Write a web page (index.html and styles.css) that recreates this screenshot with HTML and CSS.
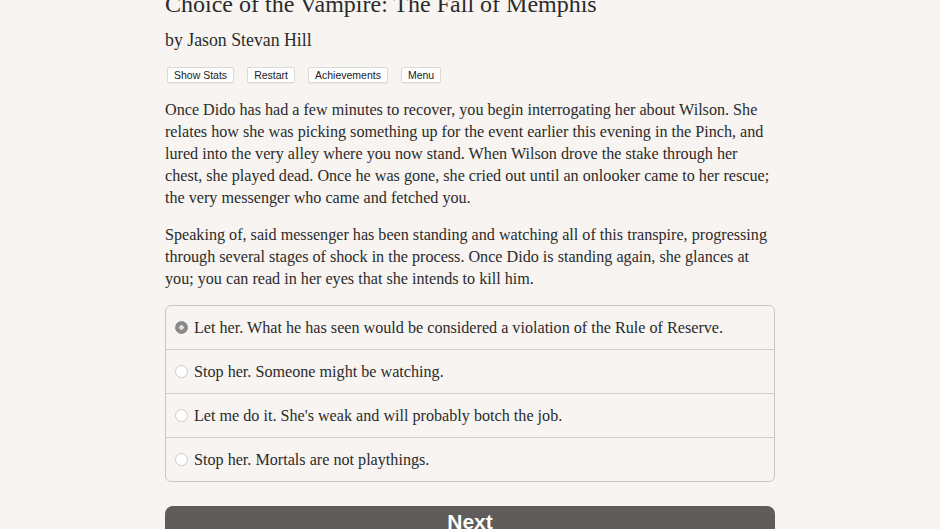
FILE: index.html
```html
<!DOCTYPE html>
<html>
<head>
<meta charset="utf-8">
<link rel="stylesheet" href="styles.css">
</head>
<body>
<div class="page">
  <h1 class="title">Choice of the Vampire: The Fall of Memphis</h1>
  <h2 class="author">by Jason Stevan Hill</h2>
  <div class="toolbar">
    <button class="tool">Show Stats</button>
    <button class="tool">Restart</button>
    <button class="tool">Achievements</button>
    <button class="tool">Menu</button>
  </div>
  <p class="para">Once Dido has had a few minutes to recover, you begin interrogating her about Wilson. She relates how she was picking something up for the event earlier this evening in the Pinch, and lured into the very alley where you now stand. When Wilson drove the stake through her chest, she played dead. Once he was gone, she cried out until an onlooker came to her rescue; the very messenger who came and fetched you.</p>
  <p class="para">Speaking of, said messenger has been standing and watching all of this transpire, progressing through several stages of shock in the process. Once Dido is standing again, she glances at you; you can read in her eyes that she intends to kill him.</p>
  <div class="choices">
    <label class="choice"><span class="radio checked"></span>Let her. What he has seen would be considered a violation of the Rule of Reserve.</label>
    <label class="choice"><span class="radio"></span>Stop her. Someone might be watching.</label>
    <label class="choice"><span class="radio"></span>Let me do it. She's weak and will probably botch the job.</label>
    <label class="choice"><span class="radio"></span>Stop her. Mortals are not playthings.</label>
  </div>
  <button class="next">Next</button>
</div>
</body>
</html>
```

FILE: styles.css
```css
html, body {
  margin: 0;
  padding: 0;
  background: #f7f4f1;
  overflow: hidden;
}
.page {
  width: 610px;
  margin: 0 auto;
  font-family: "Liberation Serif", "Times New Roman", serif;
  color: #2b2b2b;
}
.title {
  font-size: 24px;
  font-weight: normal;
  margin: -11px 0 0 0;
  line-height: 30px;
  color: #2b2b2b;
  white-space: nowrap;
}
.author {
  font-size: 17.8px;
  font-weight: normal;
  margin: 11px 0 0 0;
  line-height: 20px;
}
.toolbar {
  display: flex;
  gap: 13px;
  margin: 17px 0 0 2px;
}
.tool {
  font-family: "Liberation Sans", Arial, sans-serif;
  font-size: 10.5px;
  color: #222;
  background: #fefefe;
  border: 1px solid #dcdad7;
  border-radius: 2px;
  padding: 0 6px;
  height: 16px;
  line-height: 14px;
  box-shadow: 0 1px 1px rgba(0,0,0,0.06);
}
.para {
  font-size: 16.15px;
  line-height: 22px;
  margin: 16px 0 0 0;
}
.para + .para {
  margin-top: 15px;
}
.choices {
  margin-top: 15px;
  border: 1px solid #c9c6c3;
  border-radius: 6px;
  display: flex;
  flex-direction: column;
}
.choice {
  display: flex;
  align-items: center;
  height: 43px;
  padding-left: 9px;
  font-size: 16.15px;
  border-top: 1px solid #cfccc9;
}
.choice:first-child {
  border-top: none;
}
.radio {
  width: 11px;
  height: 11px;
  border-radius: 50%;
  background: #fff;
  border: 1px solid #cfcdcb;
  margin-right: 6px;
  flex: none;
}
.radio.checked {
  background: radial-gradient(circle, #e0e0e0 0 2px, #8a8a8a 2.5px);
  border-color: #888;
}
.next {
  display: block;
  box-sizing: border-box;
  width: 610px;
  height: 46px;
  margin-top: 24px;
  background: #5f5d5b;
  color: #fff;
  border: none;
  border-radius: 8px;
  font-family: "Liberation Sans", Arial, sans-serif;
  font-weight: bold;
  font-size: 21px;
  padding: 0 0 14px 0;
  line-height: 30px;
}
```
